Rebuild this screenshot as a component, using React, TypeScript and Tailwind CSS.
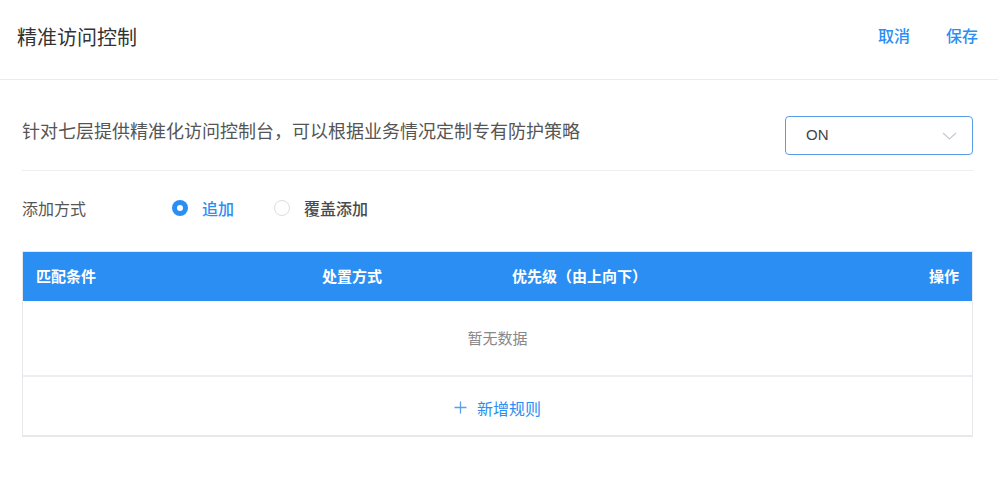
import React, { useState } from 'react';

const font = { fontFamily: '"Noto Sans CJK SC", "Noto Sans", sans-serif' };

const Radio: React.FC<{ checked: boolean; label: string; onClick: () => void }> = ({ checked, label, onClick }) => (
  <button onClick={onClick} className="flex items-center gap-[14px] focus:outline-none">
    <span
      className={
        checked
          ? 'w-[16px] h-[16px] rounded-full bg-[#2b8ef3] flex items-center justify-center'
          : 'w-[16px] h-[16px] rounded-full border border-[#dcdee2] bg-white'
      }
    >
      {checked && <span className="w-[6px] h-[6px] rounded-full bg-white" />}
    </span>
    <span
      className={
        checked
          ? 'text-[16px] leading-[24px] font-medium text-[#2b8ef3]'
          : 'text-[16px] leading-[24px] font-medium text-[#4a4a4a]'
      }
    >
      {label}
    </span>
  </button>
);

const App: React.FC = () => {
  const [mode, setMode] = useState<'append' | 'cover'>('append');

  return (
    <div className="w-[998px] h-[496px] bg-white overflow-hidden" style={font}>
      {/* header */}
      <div className="h-[80px] flex items-center justify-between pl-[17px] pr-[20px] border-b border-[#ebebeb]">
        <h1 className="text-[20px] leading-[28px] text-[#333] mb-[5px]">精准访问控制</h1>
        <div className="flex items-center gap-[36px] mb-[9px]">
          <button className="text-[16px] leading-[24px] font-medium text-[#2b8ef3]">取消</button>
          <button className="text-[16px] leading-[24px] font-medium text-[#2b8ef3]">保存</button>
        </div>
      </div>

      <div className="pl-[22px] pr-[25px]">
        {/* description + switch */}
        <div className="flex items-start justify-between pt-[36px] pb-[15px] border-b border-[#eeeeee]">
          <p className="text-[18px] leading-[24px] text-[#555] pt-[2px]">
            针对七层提供精准化访问控制台，可以根据业务情况定制专有防护策略
          </p>
          <div className="w-[188px] h-[39px] border border-[#5b9ce6] rounded-[4px] flex items-center justify-between pl-[20px] pr-[15px]">
            <span className="text-[15px] text-[#444]" style={{ fontFamily: '"Liberation Sans", sans-serif' }}>ON</span>
            <svg width="15" height="8" viewBox="0 0 15 8" fill="none">
              <path d="M1 1l6.5 6L14 1" stroke="#c5c8ce" strokeWidth="1.2" />
            </svg>
          </div>
        </div>

        {/* add mode */}
        <div className="flex items-center h-[24px] mt-[25px]">
          <span className="w-[150px] text-[16px] leading-[24px] text-[#555]">添加方式</span>
          <div className="flex items-center gap-[40px]">
            <Radio checked={mode === 'append'} label="追加" onClick={() => setMode('append')} />
            <Radio checked={mode === 'cover'} label="覆盖添加" onClick={() => setMode('cover')} />
          </div>
        </div>

        {/* table */}
        <div className="mt-[31px] border border-[#e6e8eb] border-b-2">
          <div className="grid grid-cols-[286px_190px_1fr_auto] h-[49px] items-center bg-[#2b8ef3] px-[13px] text-[15px] font-bold text-white">
            <span>匹配条件</span>
            <span>处置方式</span>
            <span>优先级（由上向下）</span>
            <span>操作</span>
          </div>
          <div className="h-[76px] flex items-center justify-center text-[15px] text-[#888] border-b-2 border-[#eceef1]">
            暂无数据
          </div>
          <button className="w-full h-[58px] flex items-center justify-center gap-[10px] text-[16px] text-[#2b8ef3] pt-[3px]">
            <svg width="13" height="13" viewBox="0 0 13 13" fill="none">
              <path d="M6.5 0.5v12M0.5 6.5h12" stroke="#5a9fe8" strokeWidth="1.3" />
            </svg>
            <span>新增规则</span>
          </button>
        </div>
      </div>
    </div>
  );
};

export default App;
